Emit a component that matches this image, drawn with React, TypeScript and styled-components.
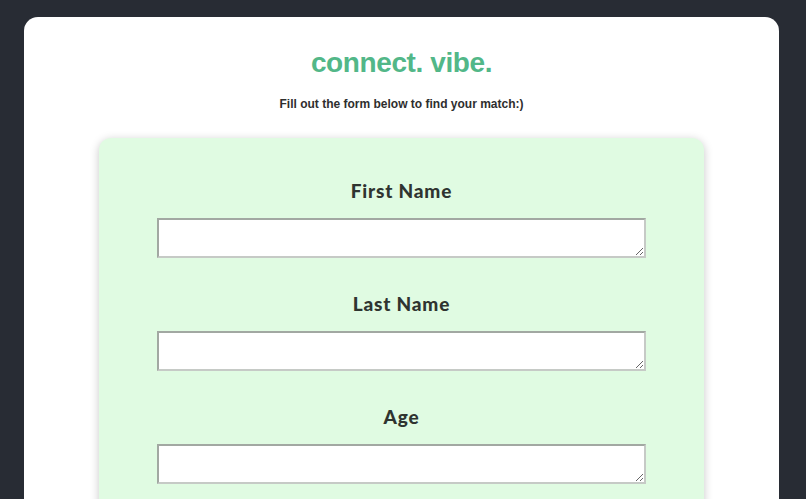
import React from 'react'
import styled, { createGlobalStyle } from 'styled-components'

const GlobalStyle = createGlobalStyle`
  html, body {
    margin: 0;
    padding: 0;
    background: #282c34;
  }
  body {
    font-family: 'Liberation Sans', Arial, sans-serif;
  }
`

const Page = styled.div`
  min-height: 499px;
  padding: 17px 27px 0 24px;
  box-sizing: border-box;
`

const Card = styled.div`
  background: #ffffff;
  border-radius: 14px 14px 0 0;
  padding: 30px 75px 40px;
  min-height: 482px;
  box-sizing: border-box;
  display: flex;
  flex-direction: column;
  align-items: center;
`

const Title = styled.h1`
  margin: 0;
  font-family: 'Liberation Sans', Arial, sans-serif;
  font-size: 28px;
  line-height: 32px;
  font-weight: 700;
  letter-spacing: -0.4px;
  color: #52b788;
`

const Subtitle = styled.p`
  margin: 18px 0 27px;
  font-size: 12px;
  line-height: 14px;
  font-weight: 700;
  color: #2e2e2e;
`

const FormBox = styled.form`
  align-self: stretch;
  background: #e0fbe2;
  border-radius: 12px;
  box-shadow: 0 2px 10px rgba(0, 0, 0, 0.22);
  padding: 40px 58px 30px;
  display: flex;
  flex-direction: column;
  gap: 33px;
`

const Field = styled.div`
  display: flex;
  flex-direction: column;
  align-items: center;
  gap: 14px;
`

const Label = styled.label`
  font-family: Lato, 'Noto Sans', sans-serif;
  font-size: 19px;
  line-height: 26px;
  font-weight: 900;
  letter-spacing: 0.8px;
  color: #2f3430;
`

const Input = styled.textarea`
  width: 100%;
  height: 40px;
  box-sizing: border-box;
  border: 2px solid #c6cac6;
  border-top-color: #a2a8a2;
  border-left-color: #a2a8a2;
  background: #ffffff;
  font-family: 'Liberation Sans', Arial, sans-serif;
  font-size: 13px;
  padding: 2px;
  margin: 0;
  outline: none;
`

const fields = ['First Name', 'Last Name', 'Age']

export default function App() {
  return (
    <>
      <GlobalStyle />
      <Page>
        <Card>
          <Title>connect. vibe.</Title>
          <Subtitle>Fill out the form below to find your match:)</Subtitle>
          <FormBox>
            {fields.map((f) => (
              <Field key={f}>
                <Label>{f}</Label>
                <Input />
              </Field>
            ))}
          </FormBox>
        </Card>
      </Page>
    </>
  )
}
